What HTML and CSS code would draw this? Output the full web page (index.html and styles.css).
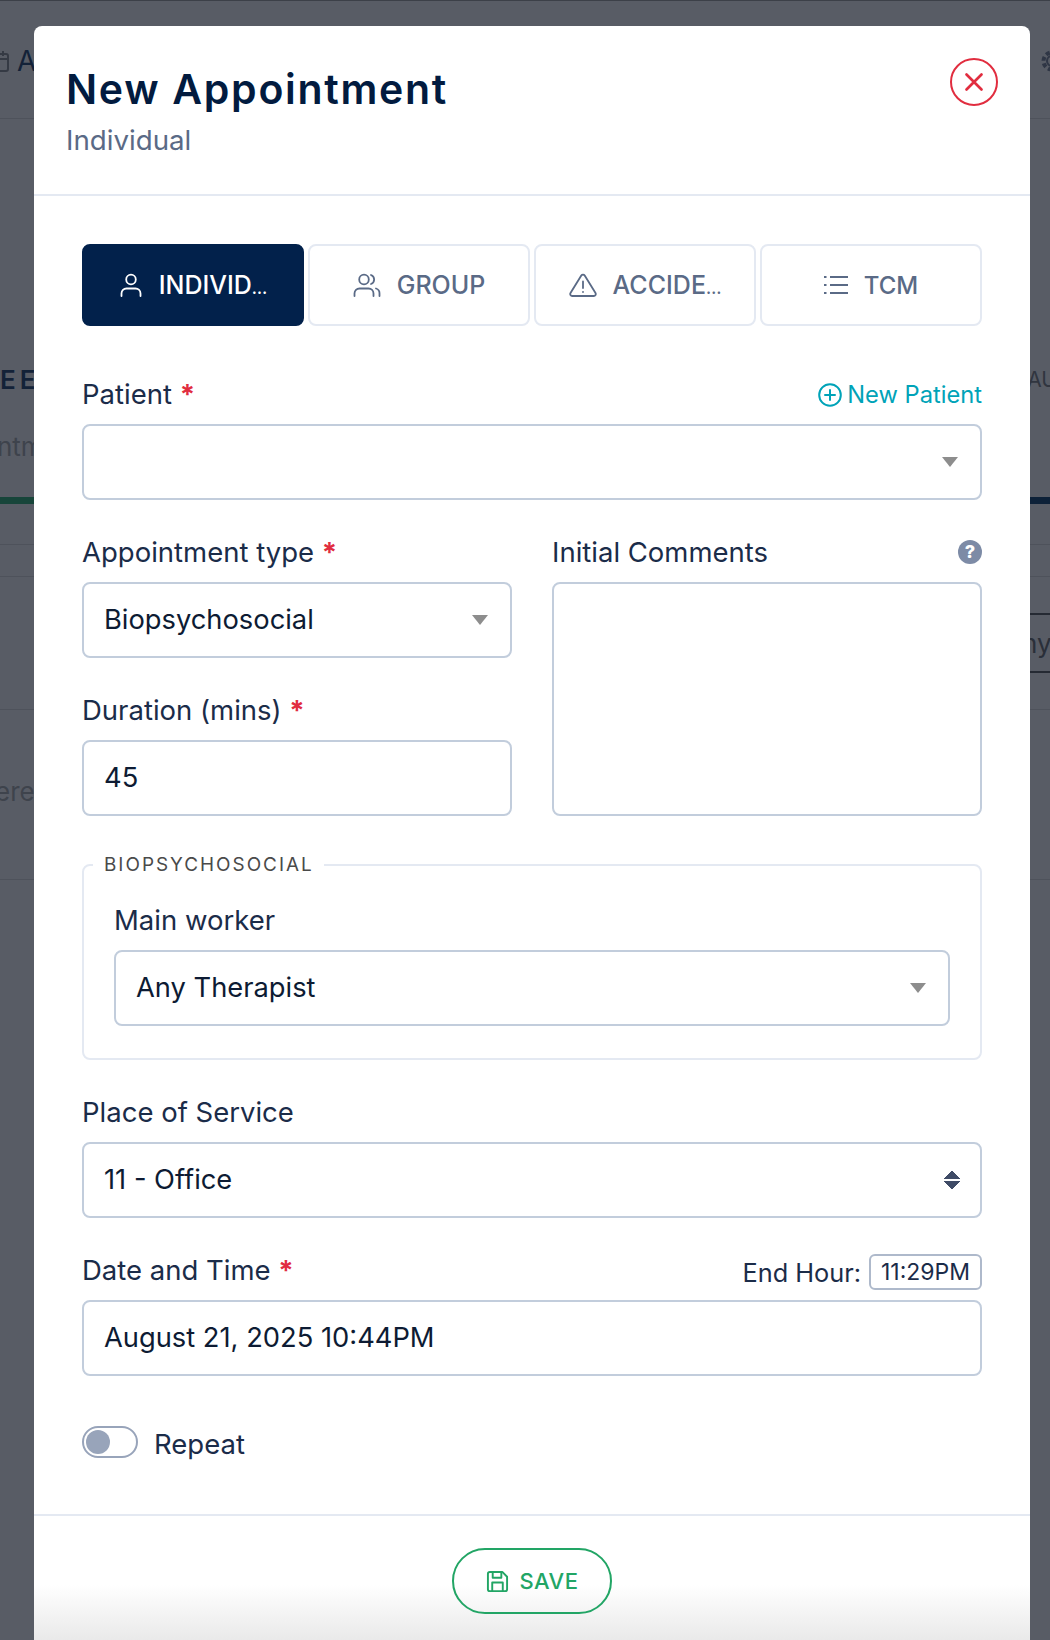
FILE: index.html
```html
<!DOCTYPE html>
<html lang="en">
  <head>
    <meta charset="UTF-8" />
    <meta name="viewport" content="width=device-width, initial-scale=1.0" />
    <title>New Appointment</title>
    <link rel="stylesheet" href="styles.css">
  </head>
  <body>
    <div class="page">
      <!-- dimmed page behind the modal -->
      <div class="behind" aria-hidden="true">
        <div class="behind-top">
          <div class="behind-title">
            <svg class="behind-icon" viewBox="0 0 24 24" width="24" height="24" fill="none" stroke="currentColor" stroke-width="2"><rect x="3" y="5" width="18" height="17" rx="2"/><path d="M16 2v5M8 2v5M3 10h18"/></svg>
            <span>A</span>
          </div>
          <svg class="behind-gear" viewBox="0 0 24 24" width="24" height="24" fill="none" stroke="currentColor"><circle cx="12" cy="12" r="5" stroke-width="2"/><circle cx="12" cy="12" r="8.5" stroke-width="4" stroke-dasharray="4 2.7"/></svg>
        </div>
        <div class="behind-head">
          <div class="behind-tabs">
            <span class="behind-tab-left">EE</span>
            <span class="behind-tab-right">AU</span>
          </div>
          <div class="behind-sub">ntm</div>
        </div>
        <div class="behind-bars"><span class="bar-green"></span><span class="bar-navy"></span></div>
        <div class="behind-row behind-row-a"></div>
        <div class="behind-row behind-row-b"></div>
        <div class="behind-row behind-row-c">
          <span class="behind-any">ny</span>
        </div>
        <div class="behind-row behind-row-d">
          <span class="behind-ere">ere</span>
        </div>
      </div>

      <div class="modal" role="dialog" aria-label="New Appointment">
        <header class="modal-header">
          <div class="modal-heading">
            <h1 class="modal-title">New Appointment</h1>
            <p class="modal-subtitle">Individual</p>
          </div>
          <button class="close-button" aria-label="Close">
            <svg viewBox="0 0 24 24" width="24" height="24" fill="none" stroke="currentColor" stroke-width="2.7" stroke-linecap="round"><path d="M4.500 4.500l15 15M19.500 4.500l-15 15"/></svg>
          </button>
        </header>

        <form class="modal-body">
          <div class="type-tabs">
            <button type="button" class="type-tab">
              <svg viewBox="0 0 24 24" width="24" height="24" fill="none" stroke="currentColor" stroke-width="1.8" stroke-linecap="round"><circle cx="12" cy="6.5" r="4.8"/><path d="M2.500 23v-2.500a5 5 0 0 1 5-5h9a5 5 0 0 1 5 5v2.500"/></svg>
              <span>INDIVID<span class="dots">…</span></span>
            </button>
            <button type="button" class="type-tab">
              <svg viewBox="0 0 28 24" width="28" height="24" fill="none" stroke="currentColor" stroke-width="1.8" stroke-linecap="round"><circle cx="11" cy="6.5" r="4.8"/><path d="M1.500 23v-2.500a5 5 0 0 1 5-5h9a5 5 0 0 1 5 5v2.500M18 2a4.800 4.800 0 0 1 0 9M23 15.500a5 5 0 0 1 3.500 5v2.500"/></svg>
              <span>GROUP</span>
            </button>
            <button type="button" class="type-tab">
              <svg viewBox="0 0 28 24" width="28" height="24" fill="none" stroke="currentColor" stroke-width="1.8" stroke-linecap="round" stroke-linejoin="round"><path d="M12.300 2.500a2 2 0 0 1 3.400 0L26.500 20a2 2 0 0 1-1.700 3H3.200a2 2 0 0 1-1.700-3z"/><path d="M14 8.500v6.500M14 18.800v.2"/></svg>
              <span>ACCIDE<span class="dots">…</span></span>
            </button>
            <button type="button" class="type-tab">
              <svg viewBox="0 0 24 24" width="24" height="24" fill="none" stroke="currentColor" stroke-width="1.9"><path d="M6 4h18M6 12h18M6 20h18M0 4h2.500M0 12h2.500M0 20h2.500"/></svg>
              <span class="tab-short">TCM</span>
            </button>
          </div>

          <div class="field field-patient">
            <div class="label-row">
              <label class="field-label">Patient <em>*</em></label>
              <a class="new-patient">
                <svg viewBox="0 0 24 24" width="24" height="24" fill="none" stroke="currentColor" stroke-width="2" stroke-linecap="round"><circle cx="12" cy="12" r="10.800"/><path d="M12 7v10M7 12h10"/></svg>
                New Patient
              </a>
            </div>
            <div class="control"><span class="caret"></span></div>
          </div>

          <div class="two-cols">
            <div class="col-left">
              <div class="field">
                <div class="label-row"><label class="field-label">Appointment type <em>*</em></label></div>
                <div class="control"><span class="control-text">Biopsychosocial</span><span class="caret"></span></div>
              </div>
              <div class="field">
                <div class="label-row"><label class="field-label">Duration (mins) <em>*</em></label></div>
                <div class="control"><span class="control-text">45</span></div>
              </div>
            </div>
            <div class="col-right">
              <div class="label-row">
                <label class="field-label">Initial Comments</label>
                <span class="help-icon">?</span>
              </div>
              <div class="control control-area"></div>
            </div>
          </div>

          <fieldset class="group-box">
            <legend>BIOPSYCHOSOCIAL</legend>
            <div class="label-row"><label class="field-label">Main worker</label></div>
            <div class="control"><span class="control-text">Any Therapist</span><span class="caret"></span></div>
          </fieldset>

          <div class="field field-place">
            <div class="label-row"><label class="field-label">Place of Service</label></div>
            <div class="control">
              <span class="control-text">11 - Office</span>
              <span class="updown"></span>
            </div>
          </div>

          <div class="field field-date">
            <div class="label-row">
              <label class="field-label">Date and Time <em>*</em></label>
              <div class="end-hour">End Hour: <span class="end-chip">11:29PM</span></div>
            </div>
            <div class="control"><span class="control-text">August 21, 2025 10:44PM</span></div>
          </div>

          <div class="repeat-row">
            <span class="toggle"></span>
            <span class="field-label repeat-label">Repeat</span>
          </div>
        </form>

        <footer class="modal-footer">
          <button class="save-button">
            <svg viewBox="0 0 24 24" width="23" height="23" fill="none" stroke="currentColor" stroke-width="2" stroke-linejoin="round"><path d="M2 4a2 2 0 0 1 2-2h13l5 5v13a2 2 0 0 1-2 2H4a2 2 0 0 1-2-2z"/><path d="M7 2v6h9V2M6.500 22v-9h11v9"/></svg>
            SAVE
          </button>
        </footer>
      </div>
    </div>
  </body>
</html>
```

FILE: styles.css
```css
* {
  padding: 0;
  margin: 0;
  box-sizing: border-box;
}

body {
  font-family: "Inter", "Liberation Sans", sans-serif;
  background-color: #585c65;
}

button {
  font-family: inherit;
  background: none;
  border: none;
  cursor: pointer;
}

.page {
  position: relative;
  width: 1050px;
  height: 1640px;
  overflow: hidden;
  background-color: #585c65;
  border-top: 1px solid #3c4048;
}

/* page behind the modal */
.behind {
  color: #132238;
}

.behind-top {
  height: 118px;
  display: flex;
  justify-content: space-between;
  padding: 46px 0 0;
  border-bottom: 1px solid #4e525b;
}

.behind-title {
  display: flex;
  align-items: center;
  gap: 6px;
  height: 28px;
  margin-left: -13px;
  font-size: 28px;
}

.behind-icon {
  color: #353a44;
}

.behind-gear {
  margin: 2px -14px 0 0;
  color: #2f3645;
}

.behind-head {
  height: 378px;
  padding-top: 244px;
}

.behind-tabs {
  display: flex;
  justify-content: space-between;
  align-items: center;
  height: 32px;
  font-size: 26px;
  font-weight: 600;
  letter-spacing: 4px;
}

.behind-tab-right {
  margin-right: -7px;
  font-size: 21px;
  font-weight: 400;
  letter-spacing: 0;
  color: #30353f;
}

.behind-sub {
  margin-top: 36px;
  margin-left: -3px;
  font-size: 26px;
  color: #3e434c;
}

.behind-bars {
  display: flex;
  justify-content: space-between;
  height: 7px;
}

.bar-green {
  width: 34px;
  background-color: #17453a;
}

.bar-navy {
  width: 30px;
  background-color: #0d2138;
}

.behind-row {
  border-bottom: 1px solid #4e525b;
}

.behind-row-a {
  height: 41px;
}

.behind-row-b {
  height: 32px;
}

.behind-row-c {
  height: 133px;
  padding-top: 36px;
}

.behind-any {
  display: block;
  width: 30px;
  height: 60px;
  margin-left: auto;
  font-size: 26px;
  line-height: 58px;
  color: #2a2f39;
  border-top: 2px solid #252a33;
  border-bottom: 2px solid #252a33;
  white-space: nowrap;
  text-indent: 2px;
}

.behind-row-d {
  height: 170px;
  padding-top: 66px;
  margin-left: -5px;
}

.behind-ere {
  font-size: 26px;
  color: #3e434c;
}

/* modal */
.modal {
  position: absolute;
  top: 25px;
  left: 34px;
  width: 996px;
  height: 1640px;
  background-color: #fff;
  border-radius: 8px 8px 0 0;
  color: #1b2c49;
}

.modal-header {
  height: 170px;
  padding: 0 32px;
  display: flex;
  justify-content: space-between;
  align-items: flex-start;
  border-bottom: 2px solid #e4e9f2;
}

.modal-heading {
  padding-top: 39px;
}

.modal-title {
  font-size: 41px;
  line-height: 48px;
  font-weight: 600;
  letter-spacing: 1.7px;
  color: #021b3f;
}

.modal-subtitle {
  margin-top: 10px;
  font-size: 27.7px;
  line-height: 34px;
  color: #5a6a86;
}

.close-button {
  width: 48px;
  height: 48px;
  margin-top: 32px;
  border: 2px solid #e12d3f;
  border-radius: 50%;
  color: #e12d3f;
  display: flex;
  align-items: center;
  justify-content: center;
}

.modal-body {
  padding: 48px 48px 0;
}

.type-tabs {
  display: grid;
  grid-template-columns: repeat(4, 1fr);
  gap: 4px;
}

.type-tab {
  height: 82px;
  border: 2px solid #e4e9f2;
  border-radius: 8px;
  display: flex;
  align-items: center;
  justify-content: center;
  gap: 16px;
  font-size: 25px;
  font-weight: 500;
  color: #5a6a86;
}

.type-tab:first-child {
  background-color: #02214b;
  border-color: #02214b;
  color: #fff;
}

.dots {
  font-size: 17px;
}

.tab-short {
  font-size: 24px;
}

.field-patient {
  margin-top: 52px;
}

.label-row {
  height: 46px;
  display: flex;
  justify-content: space-between;
  align-items: flex-start;
}

.field-label {
  font-size: 27.5px;
  line-height: 32px;
  color: #1b2c49;
}

.field-label em {
  font-style: normal;
  font-weight: 700;
  color: #e12d3f;
}

.repeat-label {
  margin-top: 2px;
}

.new-patient {
  display: flex;
  align-items: center;
  gap: 5px;
  font-size: 23.7px;
  line-height: 34px;
  color: #00a3b8;
}

.control {
  height: 76px;
  padding: 0 20px;
  display: flex;
  align-items: center;
  justify-content: space-between;
  border: 2px solid #c2cddc;
  border-radius: 8px;
  font-size: 27.3px;
  color: #0d1b33;
}

.control-text {
  margin-bottom: 2px;
}

.caret {
  margin-left: auto;
  margin-right: 2px;
  width: 0;
  height: 0;
  border-left: 8px solid transparent;
  border-right: 8px solid transparent;
  border-top: 10px solid #8d8d8d;
}

.updown {
  margin-left: auto;
  width: 16px;
  height: 20px;
  background:
    linear-gradient(to bottom right, transparent 50%, #3f4b66 50%) left top / 8px 9px no-repeat,
    linear-gradient(to bottom left, transparent 50%, #3f4b66 50%) right top / 8px 9px no-repeat,
    linear-gradient(to top right, transparent 50%, #3f4b66 50%) left bottom / 8px 9px no-repeat,
    linear-gradient(to top left, transparent 50%, #3f4b66 50%) right bottom / 8px 9px no-repeat;
}

.two-cols {
  margin-top: 36px;
  display: grid;
  grid-template-columns: 1fr 1fr;
  column-gap: 40px;
}

.col-left {
  display: flex;
  flex-direction: column;
  gap: 36px;
}

.col-right {
  display: flex;
  flex-direction: column;
}

.control-area {
  flex: 1;
}

.help-icon {
  width: 24px;
  height: 24px;
  margin-top: 4px;
  border-radius: 50%;
  background-color: #7d8ba6;
  color: #fff;
  font-size: 18px;
  font-weight: 800;
  line-height: 24px;
  text-align: center;
}

.group-box {
  margin-top: 38px;
  padding: 28px 30px 32px;
  border: 2px solid #e4e9f2;
  border-radius: 8px;
}

.group-box legend {
  margin-left: -21px;
  padding: 0 10px 0 11px;
  font-size: 18.9px;
  line-height: 22px;
  letter-spacing: 2px;
  color: #4a4a4a;
}

.field-place {
  margin-top: 36px;
}

.field-date {
  margin-top: 36px;
}

.end-hour {
  display: flex;
  align-items: center;
  gap: 8px;
  font-size: 25.3px;
  color: #1b2c49;
}

.end-chip {
  width: 113px;
  height: 36px;
  display: flex;
  align-items: center;
  justify-content: center;
  font-size: 23px;
  border: 2px solid #aeb9cb;
  border-radius: 6px;
}

.repeat-row {
  margin-top: 50px;
  display: flex;
  align-items: flex-start;
  gap: 16px;
}

.toggle {
  width: 56px;
  height: 32px;
  padding: 2px;
  border: 2px solid #98a4ba;
  border-radius: 16px;
  display: block;
}

.toggle::before {
  content: "";
  display: block;
  width: 24px;
  height: 24px;
  border-radius: 50%;
  background-color: #98a4ba;
}

.modal-footer {
  position: absolute;
  left: 0;
  right: 0;
  top: 1488px;
  height: 127px;
  border-top: 2px solid #e4e9f2;
  display: flex;
  justify-content: center;
  padding-top: 32px;
  background: linear-gradient(to bottom, #fff 55%, #e9e9e9 100%);
}

.save-button {
  width: 160px;
  height: 66px;
  border: 2px solid #22a565;
  border-radius: 33px;
  display: flex;
  align-items: center;
  justify-content: center;
  gap: 11px;
  font-size: 22px;
  font-weight: 500;
  letter-spacing: 0.5px;
  color: #22a565;
}
```
